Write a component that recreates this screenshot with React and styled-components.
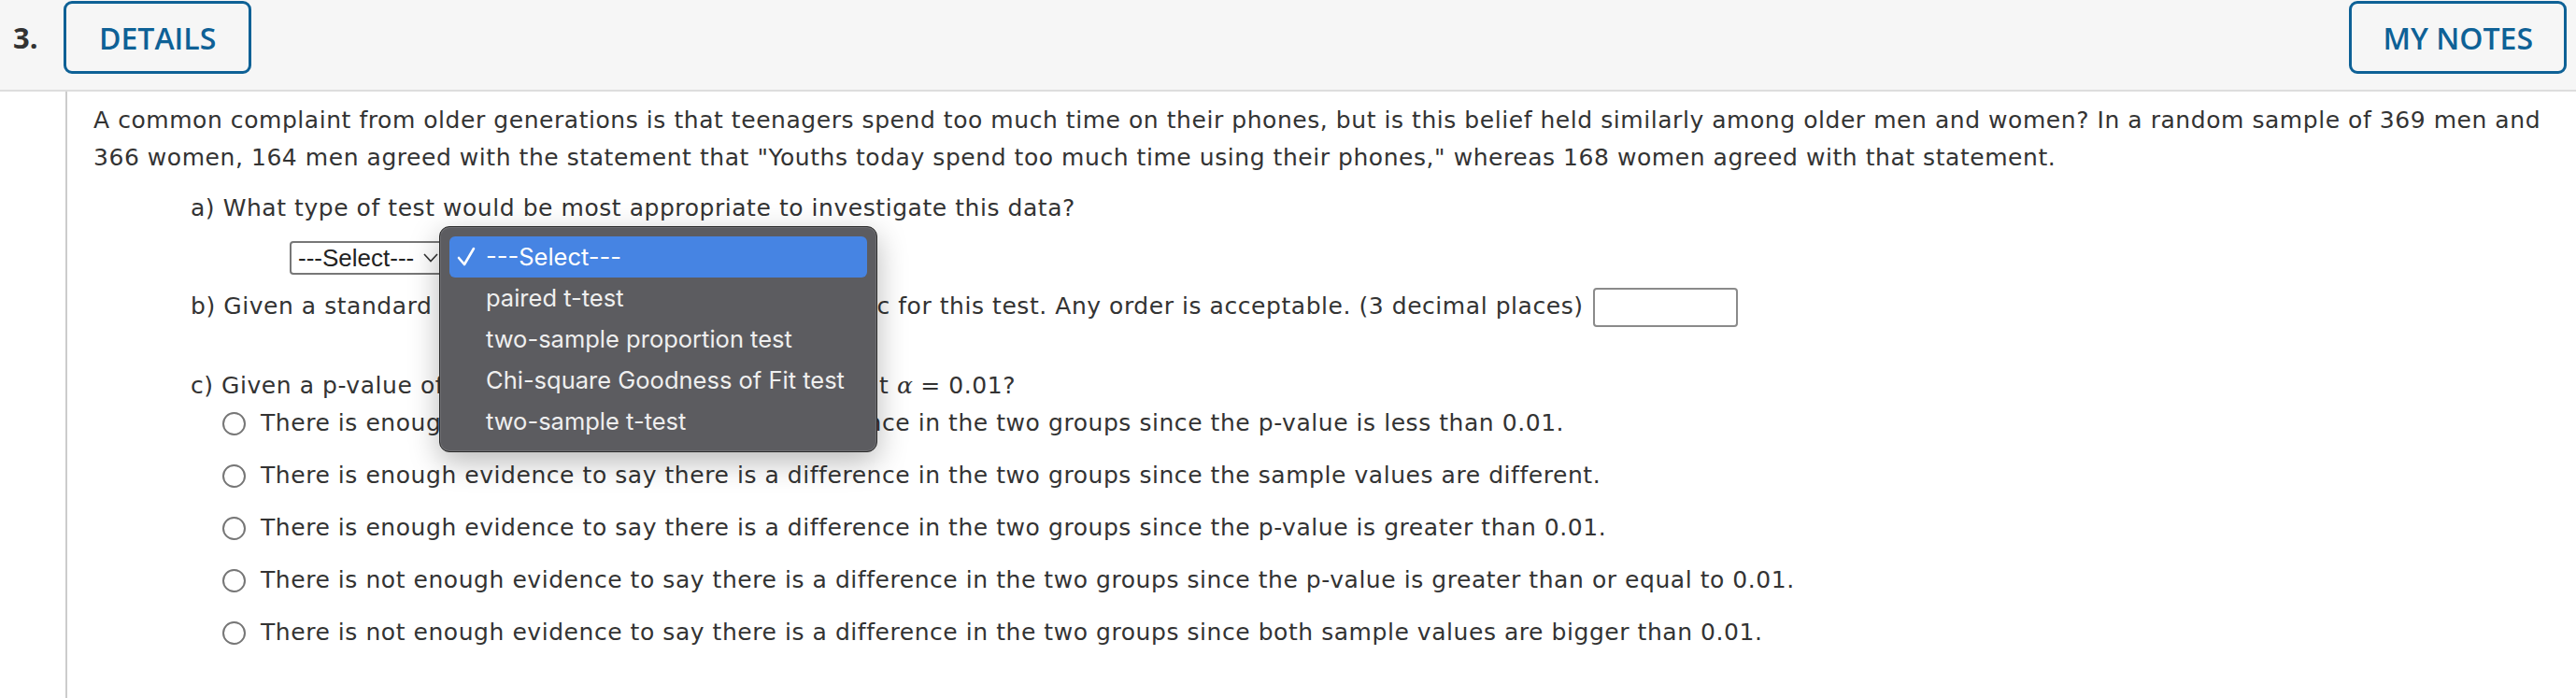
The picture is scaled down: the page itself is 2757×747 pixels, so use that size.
import React from 'react'
import styled, { createGlobalStyle } from 'styled-components'

const GlobalStyle = createGlobalStyle`
  html, body {
    margin: 0;
    padding: 0;
    background: #fff;
  }
  body {
    font-family: "DejaVu Sans", Verdana, sans-serif;
    color: #333;
  }
`

const Page = styled.div`
  min-height: 100vh;
  display: flex;
  flex-direction: column;
`

const Header = styled.header`
  height: 98px;
  box-sizing: border-box;
  padding: 1px 10px 0 14px;
  background: #f6f6f6;
  border-bottom: 2px solid #ddd;
  display: flex;
  align-items: flex-start;
`

const Number = styled.div`
  font-family: "Open Sans", sans-serif;
  font-weight: 700;
  font-size: 31px;
  line-height: 78px;
  color: #333;
  width: 54px;
`

const HeadButton = styled.button`
  height: 78px;
  box-sizing: border-box;
  padding: 0 ${p => p.$pad}px;
  border: 3px solid #0e6196;
  border-radius: 9px;
  background: transparent;
  color: #0e6196;
  font-family: "Open Sans", sans-serif;
  font-weight: 600;
  font-size: 32px;
  margin-left: ${p => (p.$right ? 'auto' : '0')};
`

const Body = styled.main`
  flex: 1;
  margin-left: 70px;
  border-left: 2px solid #ccc;
  padding: 11px 0 0 28px;
  font-size: 25px;
  letter-spacing: 0.55px;
  line-height: 40px;
`

const Intro = styled.p`
  margin: 0;
  white-space: nowrap;
`

const Parts = styled.div`
  padding-left: 104px;
`

const Line = styled.div`
  margin-top: ${p => p.$top}px;
  white-space: nowrap;
`

const SelectRow = styled.div`
  margin-top: 14px;
  padding-left: 106px;
  height: 36px;
  letter-spacing: 0;
`

const SelectWrap = styled.div`
  position: relative;
  display: inline-block;
`

const SelectBox = styled.div`
  box-sizing: border-box;
  width: 172px;
  height: 36px;
  border: 2px solid #777;
  border-radius: 4px;
  background: #fff;
  display: flex;
  align-items: center;
  gap: 10px;
  padding-left: 7px;
  font-family: "Liberation Sans", Arial, sans-serif;
  font-size: 26px;
  color: #222;
`

const Popup = styled.ul`
  position: absolute;
  left: 160px;
  top: -16px;
  width: 469px;
  box-sizing: border-box;
  margin: 0;
  padding: 10px 10px;
  list-style: none;
  background: #5c5c60;
  border: 1px solid #2a2a2a;
  border-radius: 11px;
  box-shadow: inset 0 0 0 1px rgba(255, 255, 255, 0.12), 0 10px 32px rgba(0, 0, 0, 0.28);
  z-index: 5;
  font-family: Inter, "Liberation Sans", sans-serif;
  font-size: 25.5px;
  color: #efefef;
`

const Item = styled.li`
  height: 44px;
  display: flex;
  align-items: center;
  padding-left: 8px;
  border-radius: 6px;
  background: ${p => (p.$active ? '#4684e3' : 'transparent')};
  color: ${p => (p.$active ? '#fff' : '#efefef')};
  white-space: nowrap;
`

const Check = styled.span`
  width: 31px;
  display: inline-flex;
  align-items: center;
`

const Answer = styled.span`
  display: inline-block;
  vertical-align: middle;
  box-sizing: border-box;
  width: 155px;
  height: 42px;
  margin-left: 10px;
  border: 2px solid #8a8a8a;
  border-radius: 4px;
  background: #fff;
`

const Alpha = styled.span`
  font-family: "DejaVu Serif", "Liberation Serif", serif;
  font-style: italic;
  letter-spacing: 0;
`

const Options = styled.div`
  padding-left: 34px;
  display: flex;
  flex-direction: column;
  gap: 16px;
`

const Option = styled.label`
  display: flex;
  align-items: center;
  gap: 16px;
  white-space: nowrap;
`

const Radio = styled.span`
  width: 25px;
  height: 25px;
  box-sizing: border-box;
  border: 2px solid #767676;
  border-radius: 50%;
  flex: none;
`

const tests = [
  '---Select---',
  'paired t-test',
  'two-sample proportion test',
  'Chi-square Goodness of Fit test',
  'two-sample t-test',
]

const choices = [
  'There is enough evidence to say there is a difference in the two groups since the p-value is less than 0.01.',
  'There is enough evidence to say there is a difference in the two groups since the sample values are different.',
  'There is enough evidence to say there is a difference in the two groups since the p-value is greater than 0.01.',
  'There is not enough evidence to say there is a difference in the two groups since the p-value is greater than or equal to 0.01.',
  'There is not enough evidence to say there is a difference in the two groups since both sample values are bigger than 0.01.',
]

const App = () => {
  return (
    <Page>
      <GlobalStyle />
      <Header>
        <Number>3.</Number>
        <HeadButton $pad={35}>DETAILS</HeadButton>
        <HeadButton $pad={33} $right>MY NOTES</HeadButton>
      </Header>
      <Body>
        <Intro>
          A common complaint from older generations is that teenagers spend too much time on their phones, but is this belief held similarly among older men and women? In a random sample of 369 men and
          <br />
          366 women, 164 men agreed with the statement that "Youths today spend too much time using their phones," whereas 168 women agreed with that statement.
        </Intro>
        <Parts>
          <Line $top={14}>a) What type of test would be most appropriate to investigate this data?</Line>
          <SelectRow>
            <SelectWrap>
              <SelectBox>
                ---Select---
                <svg width="16" height="10" viewBox="0 0 16 10">
                  <path d="M1 1 L8 8.5 L15 1" fill="none" stroke="#333" strokeWidth="1.6" />
                </svg>
              </SelectBox>
              <Popup>
                {tests.map((t, i) => (
                  <Item key={t} $active={i === 0}>
                    <Check>
                      {i === 0 && (
                        <svg width="20" height="22" viewBox="0 0 20 22">
                          <path d="M2 12 L8 19 L18 2" fill="none" stroke="#fff" strokeWidth="2.6" strokeLinecap="round" strokeLinejoin="round" />
                        </svg>
                      )}
                    </Check>
                    {t}
                  </Item>
                ))}
              </Popup>
            </SelectWrap>
          </SelectRow>
          <Line $top={15}>
            b) Given a standard error, now calculate the test statistic for this test. Any order is acceptable. (3 decimal places)
            <Answer />
          </Line>
          <Line $top={43}>
            c) Given a p-value of 0.7436, what could be concluded at <Alpha>α</Alpha> = 0.01?
          </Line>
          <Options>
            {choices.map(c => (
              <Option key={c}>
                <Radio />
                {c}
              </Option>
            ))}
          </Options>
        </Parts>
      </Body>
    </Page>
  )
}

export default App
